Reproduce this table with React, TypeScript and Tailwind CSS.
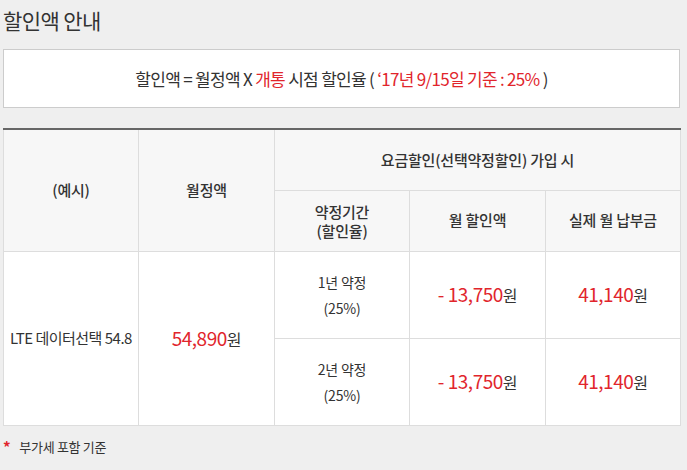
export default function App() {
  const red = "text-[#e1252c]";
  const cell = "border border-[#dddddd] text-center align-middle";

  return (
    <div
      className="w-[687px] h-[470px] bg-[#efefef] pl-[3px] text-[#333333]"
      style={{ fontFamily: '"Noto Sans CJK KR", "Noto Sans", sans-serif' }}
    >
      <h1 className="pt-[6px] h-[49px] text-[21px] leading-[28px] tracking-[-0.6px] text-[#333]">
        할인액 안내
      </h1>

      {/* formula box */}
      <div className="w-[677px] h-[59px] bg-white border border-[#cccccc] flex items-center justify-center text-[17px] tracking-[-0.7px]">
        <span>
          할인액 = 월정액 X <span className={red}>개통</span> 시점 할인율 ({" "}
          <span className={red}>‘17년 9/15일 기준 : 25%</span> )
        </span>
      </div>

      {/* table */}
      <table className="mt-[20px] w-[677px] table-fixed border-collapse border-t-2 border-t-[#666666] text-[15px] tracking-[-0.2px]">
        <colgroup>
          <col className="w-[135px]" />
          <col className="w-[136px]" />
          <col className="w-[135px]" />
          <col className="w-[136px]" />
          <col className="w-[135px]" />
        </colgroup>
        <thead className="bg-[#f7f7f7]">
          <tr className="h-[61px]">
            <th rowSpan={2} className={`${cell} border-t-0 font-medium`}>
              (예시)
            </th>
            <th rowSpan={2} className={`${cell} border-t-0 font-medium`}>
              월정액
            </th>
            <th colSpan={3} className={`${cell} border-t-0 font-medium`}>
              요금할인(선택약정할인) 가입 시
            </th>
          </tr>
          <tr className="h-[61px]">
            <th className={`${cell} font-medium leading-[19px]`}>
              약정기간
              <br />
              (할인율)
            </th>
            <th className={`${cell} font-medium`}>월 할인액</th>
            <th className={`${cell} font-medium`}>실제 월 납부금</th>
          </tr>
        </thead>
        <tbody className="bg-white">
          <tr className="h-[87px]">
            <td rowSpan={2} className={`${cell} text-[15px] tracking-[-0.5px]`}>
              LTE 데이터선택 54.8
            </td>
            <td rowSpan={2} className={cell}>
              <span className={`${red} text-[19px] tracking-[-0.5px]`}>54,890</span>
              <span className="text-[16px]">원</span>
            </td>
            <td className={`${cell} text-[14px] leading-[26px]`}>
              1년 약정
              <br />
              (25%)
            </td>
            <td className={cell}>
              <span className={`${red} text-[19px] tracking-[-0.5px]`}>
                <span className="mr-[4px]">-</span>13,750
              </span>
              <span className="text-[16px]">원</span>
            </td>
            <td className={cell}>
              <span className={`${red} text-[19px] tracking-[-0.5px]`}>41,140</span>
              <span className="text-[16px]">원</span>
            </td>
          </tr>
          <tr className="h-[87px]">
            <td className={`${cell} text-[14px] leading-[26px]`}>
              2년 약정
              <br />
              (25%)
            </td>
            <td className={cell}>
              <span className={`${red} text-[19px] tracking-[-0.5px]`}>
                <span className="mr-[4px]">-</span>13,750
              </span>
              <span className="text-[16px]">원</span>
            </td>
            <td className={cell}>
              <span className={`${red} text-[19px] tracking-[-0.5px]`}>41,140</span>
              <span className="text-[16px]">원</span>
            </td>
          </tr>
        </tbody>
      </table>

      <p className="mt-[10px] flex items-center gap-[9px] text-[13px] tracking-[-0.3px]">
        <span className="text-[#e1252c] text-[15px] font-bold">*</span>
        부가세 포함 기준
      </p>
    </div>
  );
}
